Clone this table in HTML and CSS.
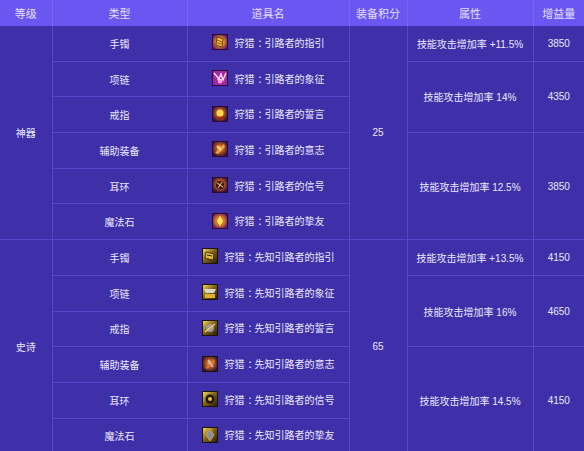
FILE: index.html
```html
<!DOCTYPE html>
<html lang="zh">
<head>
<meta charset="utf-8">
<link rel="stylesheet" href="styles.css">
</head>
<body>
<svg width="0" height="0" class="defs">
  <defs>
    <radialGradient id="gA" cx="50%" cy="50%" r="60%">
      <stop offset="0" stop-color="#ffe27a"/>
      <stop offset="0.45" stop-color="#e0901c"/>
      <stop offset="1" stop-color="#6a1a6e"/>
    </radialGradient>
    <radialGradient id="gB" cx="50%" cy="45%" r="60%">
      <stop offset="0" stop-color="#ffd45a"/>
      <stop offset="0.4" stop-color="#c06020"/>
      <stop offset="1" stop-color="#3a1436"/>
    </radialGradient>
    <linearGradient id="gC" x1="0" y1="0" x2="1" y2="1">
      <stop offset="0" stop-color="#f3d65a"/>
      <stop offset="0.5" stop-color="#7a5c18"/>
      <stop offset="1" stop-color="#2a2008"/>
    </linearGradient>
  </defs>
</svg>
<table class="gear">
  <colgroup>
    <col class="c1"><col class="c2"><col class="c3"><col class="c4"><col class="c5"><col class="c6">
  </colgroup>
  <thead>
    <tr>
      <th>等级</th><th>类型</th><th>道具名</th><th>装备积分</th><th>属性</th><th>增益量</th>
    </tr>
  </thead>
  <tbody>
    <tr>
      <td rowspan="6">神器</td>
      <td>手镯</td>
      <td><span class="item"><svg class="ico" viewBox="0 0 16 16"><rect x="0.5" y="0.5" width="15" height="15" fill="#7a1c80" stroke="#2a0a30"/><rect x="1" y="1" width="14" height="14" fill="url(#gA)"/><path d="M5 3 L11 5 L10 13 L4 11 Z" fill="#f0c040" stroke="#5a2a08" stroke-width="0.8"/><path d="M5 6 L10 8 M5 9 L10 10" stroke="#6a3a0a" stroke-width="0.8"/></svg><span>狩猎<span class="colon">：</span>引路者的指引</span></span></td>
      <td rowspan="6">25</td>
      <td>技能攻击增加率 +11.5%</td>
      <td>3850</td>
    </tr>
    <tr>
      <td>项链</td>
      <td><span class="item"><svg class="ico" viewBox="0 0 16 16"><rect x="0.5" y="0.5" width="15" height="15" fill="#a02aa8" stroke="#2a0a30"/><path d="M2 3 L7 9 L9 4 L11 10 L14 3" stroke="#ffe0f0" stroke-width="1.4" fill="none"/><path d="M5 9 L8 14 L11 9 Z" fill="#f4c8e8"/><rect x="6" y="10" width="4" height="3" fill="#f6a0d0"/></svg><span>狩猎<span class="colon">：</span>引路者的象征</span></span></td>
      <td rowspan="2">技能攻击增加率 14%</td>
      <td rowspan="2">4350</td>
    </tr>
    <tr>
      <td>戒指</td>
      <td><span class="item"><svg class="ico" viewBox="0 0 16 16"><rect x="0.5" y="0.5" width="15" height="15" fill="#5a1460" stroke="#2a0a30"/><rect x="1" y="1" width="14" height="14" fill="url(#gB)"/><circle cx="8" cy="7" r="3.5" fill="#ffd850"/><path d="M4 12 L12 10 L11 14 Z" fill="#a0300e"/></svg><span>狩猎<span class="colon">：</span>引路者的誓言</span></span></td>
    </tr>
    <tr>
      <td>辅助装备</td>
      <td><span class="item"><svg class="ico" viewBox="0 0 16 16"><rect x="0.5" y="0.5" width="15" height="15" fill="#7a1c80" stroke="#2a0a30"/><rect x="1" y="1" width="14" height="14" fill="url(#gB)"/><path d="M3 12 L12 3 L13 6 L6 13 Z" fill="#f2a040"/><path d="M5 5 L9 9" stroke="#fff0c0" stroke-width="1.2"/></svg><span>狩猎<span class="colon">：</span>引路者的意志</span></span></td>
      <td rowspan="3">技能攻击增加率 12.5%</td>
      <td rowspan="3">3850</td>
    </tr>
    <tr>
      <td>耳环</td>
      <td><span class="item"><svg class="ico" viewBox="0 0 16 16"><rect x="0.5" y="0.5" width="15" height="15" fill="#4a1450" stroke="#2a0a30"/><rect x="1" y="1" width="14" height="14" fill="url(#gB)"/><circle cx="8" cy="8" r="4" fill="#2a1024"/><path d="M5 6 L11 10 M10 5 L6 11" stroke="#f2b040" stroke-width="1.2"/></svg><span>狩猎<span class="colon">：</span>引路者的信号</span></span></td>
    </tr>
    <tr>
      <td>魔法石</td>
      <td><span class="item"><svg class="ico" viewBox="0 0 16 16"><rect x="0.5" y="0.5" width="15" height="15" fill="#8a2090" stroke="#2a0a30"/><rect x="1" y="1" width="14" height="14" fill="url(#gA)"/><path d="M8 2 L12 8 L8 14 L4 8 Z" fill="#ffdc60" stroke="#b05010" stroke-width="0.8"/></svg><span>狩猎<span class="colon">：</span>引路者的挚友</span></span></td>
    </tr>
    <tr>
      <td rowspan="6">史诗</td>
      <td>手镯</td>
      <td><span class="item"><svg class="ico" viewBox="0 0 16 16"><rect x="0.5" y="0.5" width="15" height="15" fill="#3a2c08" stroke="#1a1404"/><rect x="1" y="1" width="14" height="14" fill="url(#gC)"/><path d="M4 4 L12 6 L11 12 L3 10 Z" fill="#e8c040" stroke="#2a1e04" stroke-width="0.8"/><path d="M5 7 L10 8" stroke="#2a1e04" stroke-width="1"/></svg><span>狩猎<span class="colon">：</span>先知引路者的指引</span></span></td>
      <td rowspan="6">65</td>
      <td>技能攻击增加率 +13.5%</td>
      <td>4150</td>
    </tr>
    <tr>
      <td>项链</td>
      <td><span class="item"><svg class="ico" viewBox="0 0 16 16"><rect x="0.5" y="0.5" width="15" height="15" fill="#3a2c08" stroke="#1a1404"/><rect x="1" y="1" width="14" height="14" fill="url(#gC)"/><path d="M2 5 L14 5 L12 9 L4 9 Z" fill="#d8d8c8"/><rect x="3" y="10" width="10" height="4" fill="#e0b030"/></svg><span>狩猎<span class="colon">：</span>先知引路者的象征</span></span></td>
      <td rowspan="2">技能攻击增加率 16%</td>
      <td rowspan="2">4650</td>
    </tr>
    <tr>
      <td>戒指</td>
      <td><span class="item"><svg class="ico" viewBox="0 0 16 16"><rect x="0.5" y="0.5" width="15" height="15" fill="#2a2008" stroke="#1a1404"/><rect x="1" y="1" width="14" height="14" fill="url(#gC)"/><circle cx="8" cy="8" r="4" fill="#9a9aa0"/><path d="M3 12 L13 4" stroke="#f0d050" stroke-width="1.5"/></svg><span>狩猎<span class="colon">：</span>先知引路者的誓言</span></span></td>
    </tr>
    <tr>
      <td>辅助装备</td>
      <td><span class="item"><svg class="ico" viewBox="0 0 16 16"><rect x="0.5" y="0.5" width="15" height="15" fill="#5a2a08" stroke="#1a1404"/><rect x="1" y="1" width="14" height="14" fill="url(#gB)"/><path d="M3 12 L12 3 L13 6 L6 13 Z" fill="#e07030"/><path d="M6 4 L11 11" stroke="#c8c8c8" stroke-width="1.4"/></svg><span>狩猎<span class="colon">：</span>先知引路者的意志</span></span></td>
      <td rowspan="3">技能攻击增加率 14.5%</td>
      <td rowspan="3">4150</td>
    </tr>
    <tr>
      <td>耳环</td>
      <td><span class="item"><svg class="ico" viewBox="0 0 16 16"><rect x="0.5" y="0.5" width="15" height="15" fill="#2a2008" stroke="#1a1404"/><rect x="1" y="1" width="14" height="14" fill="url(#gC)"/><circle cx="8" cy="8" r="4.5" fill="#1e1808"/><circle cx="8" cy="8" r="2" fill="#e8c040"/></svg><span>狩猎<span class="colon">：</span>先知引路者的信号</span></span></td>
    </tr>
    <tr>
      <td>魔法石</td>
      <td><span class="item"><svg class="ico" viewBox="0 0 16 16"><rect x="0.5" y="0.5" width="15" height="15" fill="#2a2008" stroke="#1a1404"/><rect x="1" y="1" width="14" height="14" fill="url(#gC)"/><path d="M8 2 L12 8 L8 14 L4 8 Z" fill="#8890a0" stroke="#e0b030" stroke-width="0.8"/></svg><span>狩猎<span class="colon">：</span>先知引路者的挚友</span></span></td>
    </tr>
  </tbody>
</table>
</body>
</html>
```
FILE: styles.css
```css
html, body {
  margin: 0;
  padding: 0;
  background: #3f30aa;
}
.defs {
  position: absolute;
  width: 0;
  height: 0;
}
.gear {
  width: 584px;
  border-collapse: collapse;
  table-layout: fixed;
  font-family: "Liberation Sans", "Noto Sans CJK SC", sans-serif;
  font-size: 10px;
  color: #ebe8ff;
  background: #3f30aa;
}
.c1 { width: 52px; }
.c2 { width: 135px; }
.c3 { width: 162px; }
.c4 { width: 58px; }
.c5 { width: 126px; }
.c6 { width: 51px; }
.gear th {
  height: 26px;
  padding: 0;
  background: #6b56f1;
  font-weight: normal;
  font-size: 11px;
  color: #e4e0ff;
  border-left: 1px solid #7a66f4;
  text-align: center;
}
.gear th:first-child { border-left: none; }
.gear td {
  height: 34.7px;
  padding: 0;
  text-align: center;
  border: 1px solid #5546cc;
}
.gear tr td:first-child { border-left: none; }
.gear tr td:last-child { border-right: none; }
.gear thead th { border-top: none; border-bottom: none; }
.gear tbody tr:first-child td { border-top: none; }
.item {
  display: inline-flex;
  align-items: center;
  gap: 7px;
}
.colon {
  padding-left: 0.3em;
  letter-spacing: -0.3em;
}
.ico {
  width: 16px;
  height: 16px;
  display: block;
}
```
